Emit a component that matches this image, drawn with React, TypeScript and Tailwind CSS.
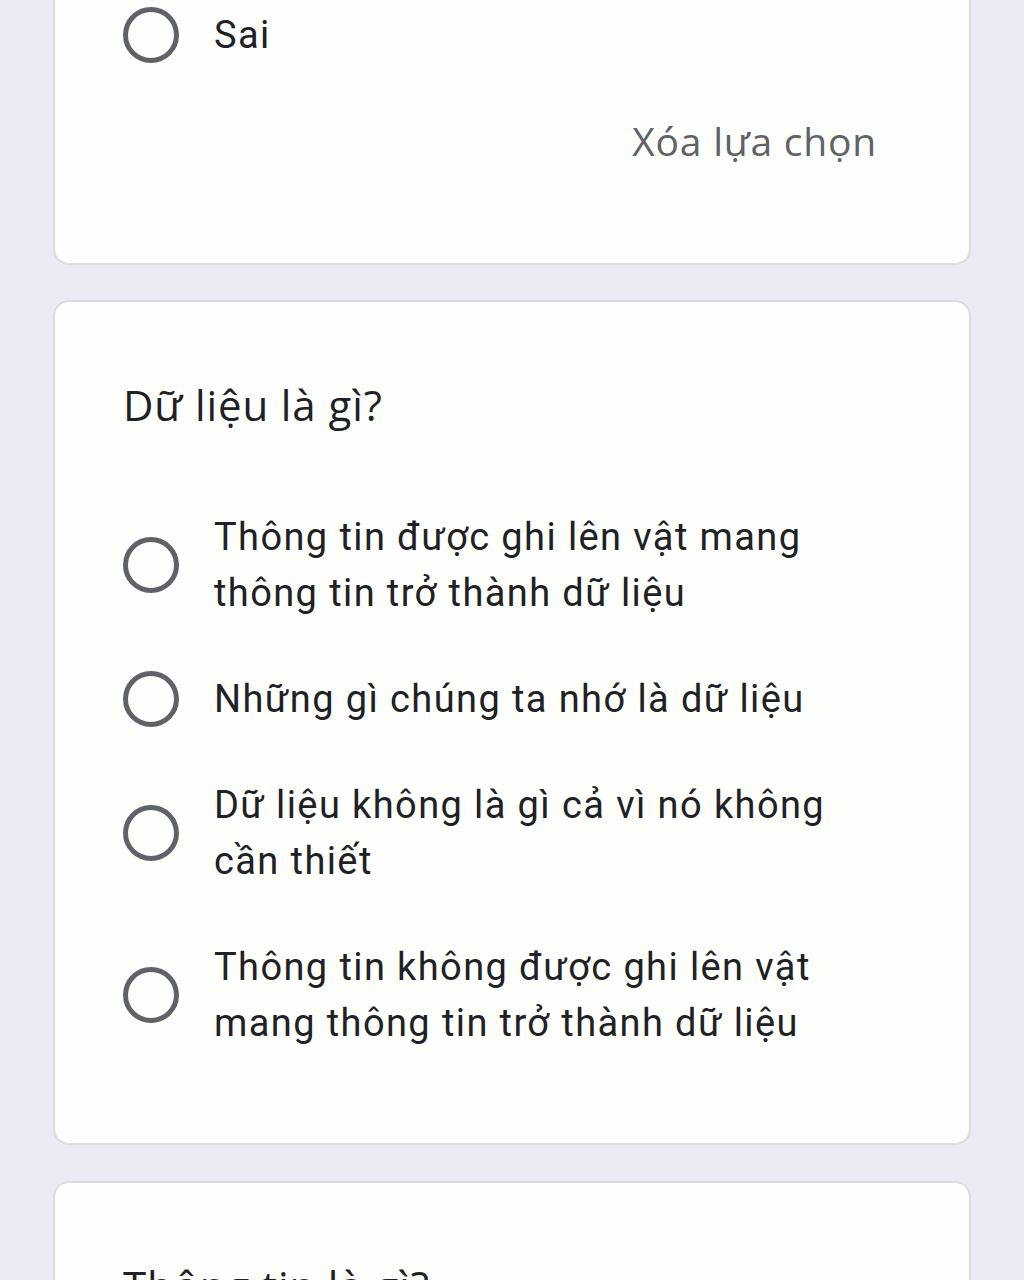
const font = { fontFamily: "Roboto, 'Noto Sans', sans-serif" };
const sansTitle = { fontFamily: "'Open Sans', Roboto, sans-serif" };

function Radio() {
    return <span className="block w-[56px] h-[56px] shrink-0 rounded-full border-[5px] border-[#5f6368]" />;
}

function Option({ text }: { text: string }) {
    return (
        <div className="flex items-center">
            <Radio />
            <span className="ml-[35px] w-[665px] text-[38px] leading-[56px] tracking-[1.4px] text-[#202124]">{text}</span>
        </div>
    );
}

function Card({ children, className = "" }: { children: React.ReactNode; className?: string }) {
    return (
        <div className={`bg-[#fefefc] border-2 border-[#dadce0] rounded-[16px] pl-[68px] pr-[92px] ${className}`}>
            {children}
        </div>
    );
}

function Question({ text }: { text: string }) {
    return (
        <h2 className="text-[42px] leading-[56px] tracking-[0.9px] text-[#202124] font-normal" style={sansTitle}>
            {text}
        </h2>
    );
}

export default function App() {
    return (
        <div className="h-[1280px] overflow-hidden bg-[#ebebf5] px-[53px]" style={font}>
            <Card className="-mt-[40px] pt-[47px] pb-[98px] border-t-0 rounded-t-none">
                <Option text="Sai" />
                <div className="flex justify-end mt-[54px]">
                    <span className="text-[39px] leading-[48px] tracking-[0.8px] font-medium text-[#5f6368]" style={sansTitle}>
                        Xóa lựa chọn
                    </span>
                </div>
            </Card>

            <Card className="mt-[35px] pt-[75px] pb-[92px]">
                <Question text="Dữ liệu là gì?" />
                <div className="mt-[76px] flex flex-col gap-[50px]">
                    <Option text="Thông tin được ghi lên vật mang thông tin trở thành dữ liệu" />
                    <Option text="Những gì chúng ta nhớ là dữ liệu" />
                    <Option text="Dữ liệu không là gì cả vì nó không cần thiết" />
                    <Option text="Thông tin không được ghi lên vật mang thông tin trở thành dữ liệu" />
                </div>
            </Card>

            <Card className="mt-[36px] pt-[75px] pb-[92px]">
                <Question text="Thông tin là gì?" />
            </Card>
        </div>
    );
}
